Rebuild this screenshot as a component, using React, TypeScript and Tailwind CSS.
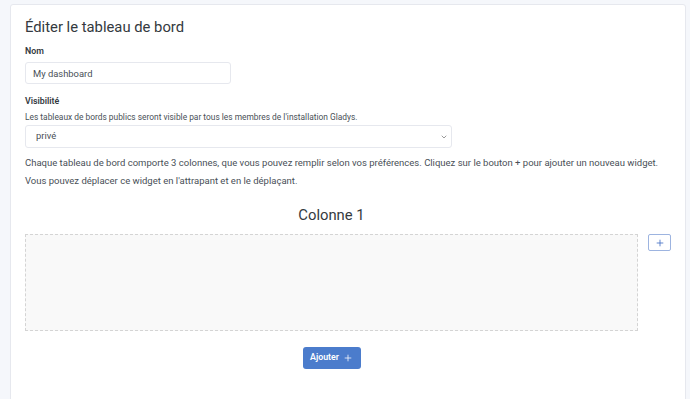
import { ChevronDown, Plus } from 'lucide-react';

export default function App() {
  return (
    <div className="h-[399px] overflow-hidden bg-[#f5f7fb] pl-[10px] pr-[4px] pt-[4px] font-['Roboto',sans-serif] text-[#495057]">
      <div className="h-[420px] rounded-[3px] border border-[#e6e8ee] bg-white px-[14px] pt-[13px]">
        <h2 className="text-[14.8px] leading-[18px] font-normal text-[#343a40]">Éditer le tableau de bord</h2>

        <div className="mt-[9px]">
          <label className="block text-[8.8px] leading-[12px] font-semibold text-[#343a40]">Nom</label>
          <input
            defaultValue="My dashboard"
            className="mt-[5px] block h-[22px] w-[206px] rounded-[3px] border border-[#e6e8ee] px-[7px] text-[9.4px] text-[#495057] outline-none"
          />
        </div>

        <div className="mt-[11px]">
          <label className="block text-[8.8px] leading-[12px] font-semibold text-[#343a40]">Visibilité</label>
          <p className="mt-[5px] text-[8.4px] leading-[10px] text-[#495057]">
            Les tableaux de bords publics seront visible par tous les membres de l'installation Gladys.
          </p>
          <div className="mt-[3px] flex h-[23px] w-[427px] items-center justify-between rounded-[3px] border border-[#e6e8ee] pl-[10px] pr-[3px] text-[9.4px]">
            <span>privé</span>
            <ChevronDown size={8} strokeWidth={2} className="text-[#666]" />
          </div>
        </div>

        <p className="mt-[6px] text-[9.5px] leading-[18px] text-[#495057]">
          Chaque tableau de bord comporte 3 colonnes, que vous pouvez remplir selon vos préférences. Cliquez sur le bouton + pour ajouter un nouveau widget.
          <br />
          Vous pouvez déplacer ce widget en l'attrapant et en le déplaçant.
        </p>

        <div className="mt-[15px] flex gap-[10px]">
          <div className="w-[614px]">
            <h3 className="text-center text-[14.8px] leading-[20px] font-normal text-[#343a40]">Colonne 1</h3>
            <div className="mt-[9px] h-[97px] border border-dashed border-[#d4d4d4] bg-[#f9f9f9]" />
            <div className="mt-[16px] flex justify-center">
              <button className="flex h-[22px] w-[58px] items-center justify-center gap-[4px] rounded-[3px] bg-[#4b7ccc] text-[8.8px] font-semibold text-white">
                Ajouter <Plus size={10} strokeWidth={1.8} />
              </button>
            </div>
          </div>
          <div className="pt-[29px]">
            <button className="flex h-[17px] w-[23px] items-center justify-center rounded-[2px] border border-[#9db4e0] bg-white text-[#4370c4]">
              <Plus size={10} strokeWidth={2} />
            </button>
          </div>
        </div>
      </div>
    </div>
  );
}
